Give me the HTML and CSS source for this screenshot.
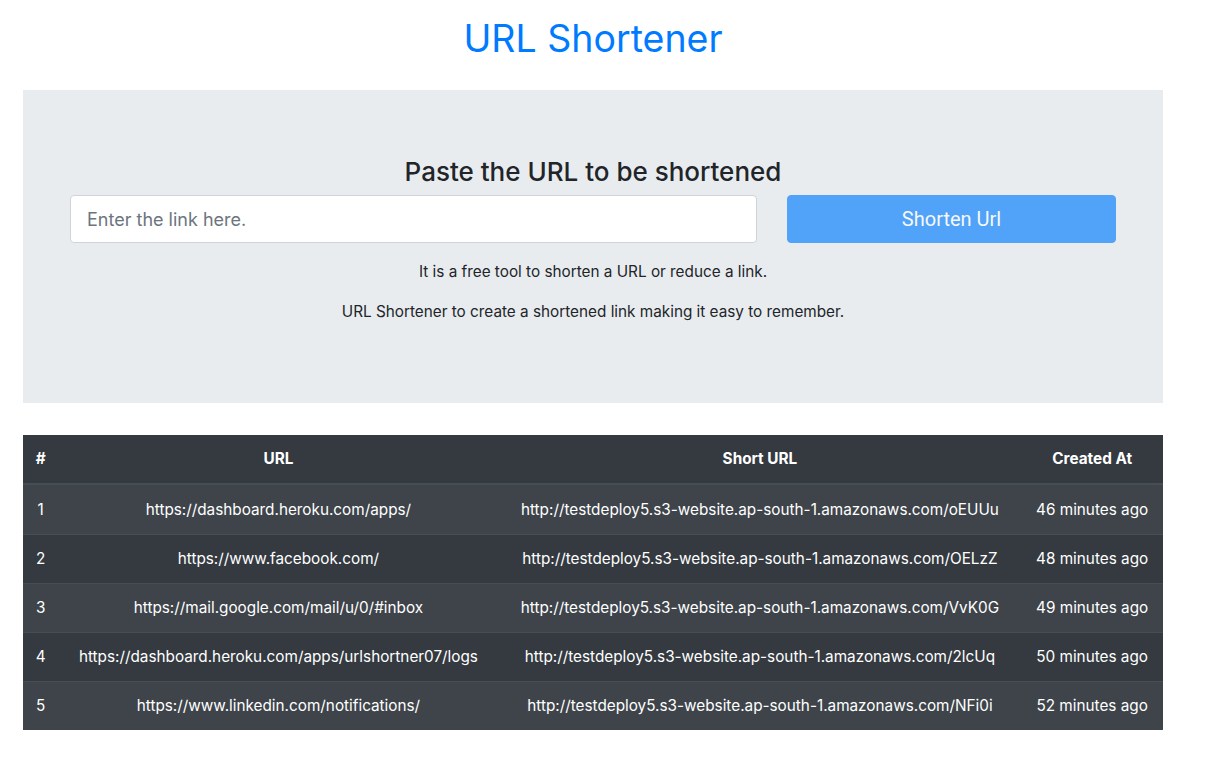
FILE: index.html
```html
<!DOCTYPE html>
<html lang="en">
<head>
<meta charset="utf-8">
<title>URL Shortener</title>
<link rel="stylesheet" href="styles.css">
</head>
<body>
<div class="page">
  <h1 class="title">URL Shortener</h1>
  <section class="jumbotron">
    <h4 class="lead-heading">Paste the URL to be shortened</h4>
    <form class="shorten-form">
      <input class="link-input" type="text" placeholder="Enter the link here.">
      <button class="shorten-btn" type="button" disabled>Shorten Url</button>
    </form>
    <p class="info">It is a free tool to shorten a URL or reduce a link.</p>
    <p class="info">URL Shortener to create a shortened link making it easy to remember.</p>
  </section>
  <table class="links">
    <thead>
      <tr><th>#</th><th>URL</th><th>Short URL</th><th>Created At</th></tr>
    </thead>
    <tbody>
      <tr><td>1</td><td>https://dashboard.heroku.com/apps/</td><td>http://testdeploy5.s3-website.ap-south-1.amazonaws.com/oEUUu</td><td>46 minutes ago</td></tr>
      <tr><td>2</td><td>https://www.facebook.com/</td><td>http://testdeploy5.s3-website.ap-south-1.amazonaws.com/OELzZ</td><td>48 minutes ago</td></tr>
      <tr><td>3</td><td>https://mail.google.com/mail/u/0/#inbox</td><td>http://testdeploy5.s3-website.ap-south-1.amazonaws.com/VvK0G</td><td>49 minutes ago</td></tr>
      <tr><td>4</td><td>https://dashboard.heroku.com/apps/urlshortner07/logs</td><td>http://testdeploy5.s3-website.ap-south-1.amazonaws.com/2lcUq</td><td>50 minutes ago</td></tr>
      <tr><td>5</td><td>https://www.linkedin.com/notifications/</td><td>http://testdeploy5.s3-website.ap-south-1.amazonaws.com/NFi0i</td><td>52 minutes ago</td></tr>
    </tbody>
  </table>
</div>
</body>
</html>
```
FILE: styles.css
```css
* { box-sizing: border-box; }
html, body { margin: 0; padding: 0; background: #fff; }
body {
  font-family: Inter, "Noto Sans", "Liberation Sans", sans-serif;
  font-size: 16px;
  line-height: 1.5;
  color: #212529;
}
.page {
  width: 1140px;
  margin-left: 23px;
}
.title {
  margin: 15px 0 27px;
  font-size: 37.5px;
  font-weight: 400;
  line-height: 48px;
  color: #007bff;
  text-align: center;
}
.jumbotron {
  background: #e9ecef;
  padding: 67px 47px 63px;
  margin-bottom: 32px;
  text-align: center;
}
.lead-heading {
  margin: 0 0 9px;
  font-size: 26px;
  font-weight: 500;
  line-height: 29px;
  color: #212529;
}
.shorten-form {
  display: grid;
  grid-template-columns: minmax(0, 687fr) minmax(0, 329fr);
  gap: 30px;
  margin: 0 0 17px;
}
.link-input {
  height: 48px;
  padding: 8px 16px;
  font-family: inherit;
  font-size: 18px;
  color: #495057;
  background: #fff;
  border: 1px solid #ced4da;
  border-radius: 4px;
  outline: none;
}
.link-input::placeholder { color: #6c757d; opacity: 1; }
.shorten-btn {
  height: 48px;
  padding: 8px 16px;
  font-family: Roboto, Inter, sans-serif;
  font-size: 20px;
  color: #fff;
  background: #007bff;
  opacity: .65;
  border: 1px solid #007bff;
  border-radius: 4px;
}
.info {
  margin: 0 0 16px;
  font-size: 15.3px;
  line-height: 24px;
}
.links {
  width: 100%;
  border-collapse: separate;
  border-spacing: 0;
  background: #343a40;
  color: #fff;
  font-size: 15.3px;
  text-align: center;
}
.links th, .links td {
  padding: 12px;
  line-height: 24px;
  white-space: nowrap;
}
.links th {
  font-weight: 700;
  border-bottom: 2px solid #454d55;
}
.links td { border-top: 1px solid #454d55; }
.links tbody tr:first-child td { border-top: 0; padding-top: 13px; }
.links tbody tr:nth-child(odd) { background: #3e444a; }
```
